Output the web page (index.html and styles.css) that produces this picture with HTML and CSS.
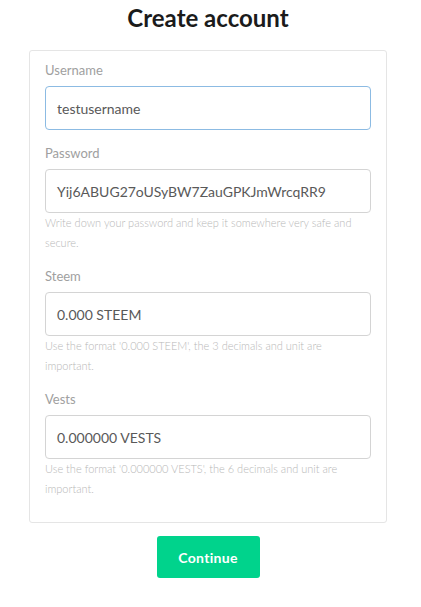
FILE: index.html
```html
<!DOCTYPE html>
<html>
<head>
<meta charset="utf-8">
<link rel="stylesheet" href="styles.css">
</head>
<body>
<div class="page">
  <h1 class="title">Create account</h1>
  <form class="card">
    <div class="group">
      <label class="label">Username</label>
      <div class="input focused">testusername</div>
    </div>
    <div class="group">
      <label class="label">Password</label>
      <div class="input">Yij6ABUG27oUSyBW7ZauGPKJmWrcqRR9</div>
      <p class="help">Write down your password and keep it somewhere very safe and secure.</p>
    </div>
    <div class="group">
      <label class="label">Steem</label>
      <div class="input">0.000 STEEM</div>
      <p class="help">Use the format '0.000 STEEM', the 3 decimals and unit are important.</p>
    </div>
    <div class="group">
      <label class="label">Vests</label>
      <div class="input">0.000000 VESTS</div>
      <p class="help">Use the format '0.000000 VESTS', the 6 decimals and unit are important.</p>
    </div>
  </form>
  <div class="actions">
    <button class="btn" type="button">Continue</button>
  </div>
</div>
</body>
</html>
```

FILE: styles.css
```css
html, body {
  margin: 0;
  padding: 0;
  background: #fff;
}
body {
  padding-right: 5px;
  font-family: Lato, "Open Sans", sans-serif;
}
.page {
  display: flex;
  flex-direction: column;
  align-items: center;
}
.title {
  margin: 0 0 14px;
  font-size: 24px;
  line-height: 36px;
  font-weight: 700;
  color: #1b1b1b;
}
.card {
  box-sizing: border-box;
  width: 358px;
  border: 1px solid #e5e5e5;
  border-radius: 3px;
  padding: 9px 15px 10px;
  margin: 0;
}
.group {
  margin-bottom: 13px;
}
.label {
  display: block;
  font-size: 13px;
  line-height: 20px;
  color: #a0a0a0;
  margin-bottom: 6px;
}
.input {
  box-sizing: border-box;
  height: 44px;
  border: 1px solid #d4d4d4;
  border-radius: 4px;
  padding: 0 11px;
  display: flex;
  align-items: center;
  font-size: 14px;
  color: #595959;
}
.input.focused {
  border-color: #8cbbe3;
}
.help {
  margin: 0;
  font-size: 11px;
  line-height: 20px;
  font-weight: 300;
  color: #b8b8b8;
}
.actions {
  margin-top: 13px;
  display: flex;
  justify-content: center;
}
.btn {
  width: 103px;
  height: 42px;
  border: 0;
  border-radius: 3px;
  background: #00d38c;
  color: #fff;
  font-family: Lato, "Open Sans", sans-serif;
  font-weight: 700;
  font-size: 14px;
  letter-spacing: 0.3px;
  padding: 0;
}
```
